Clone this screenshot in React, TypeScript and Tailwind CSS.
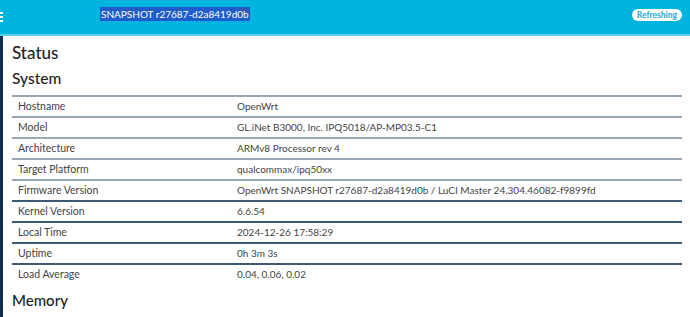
import React from 'react';

type Row = {
    label: string;
    value: string;
};

const rows: Row[] = [
    {label: 'Hostname', value: 'OpenWrt'},
    {label: 'Model', value: 'GL.iNet B3000, Inc. IPQ5018/AP-MP03.5-C1'},
    {label: 'Architecture', value: 'ARMv8 Processor rev 4'},
    {label: 'Target Platform', value: 'qualcommax/ipq50xx'},
    {label: 'Firmware Version', value: 'OpenWrt SNAPSHOT r27687-d2a8419d0b / LuCI Master 24.304.46082-f9899fd'},
    {label: 'Kernel Version', value: '6.6.54'},
    {label: 'Local Time', value: '2024-12-26 17:58:29'},
    {label: 'Uptime', value: '0h 3m 3s'},
    {label: 'Load Average', value: '0.04, 0.06, 0.02'},
];

const App: React.FC = () => {
    return (
        <div className="w-[690px] h-[317px] overflow-hidden bg-white font-['Lato',sans-serif] text-[#333]">
            {/* шапка */}
            <div className="h-[36px] bg-[#00b4e0] border-b-2 border-[#5ccbea] flex items-center">
                <div className="w-[3px] flex flex-col gap-[2px] self-start mt-[12px]">
                    <span className="h-[2px] bg-white" />
                    <span className="h-[2px] bg-white" />
                    <span className="h-[2px] bg-white" />
                </div>
                <div className="ml-[97px] mb-[6px] text-[10px] leading-[12px] text-white">
                    <span className="bg-[#1f5ccc] px-[1px] py-[1px]">SNAPSHOT r27687-d2a8419d0b</span>
                </div>
                <div className="ml-auto mr-[8px] mb-[5px] bg-white rounded-full px-[5px] text-[8.5px] leading-[12px] font-bold text-[#2ba6d6]">
                    Refreshing
                </div>
            </div>

            <div className="flex h-full">
                <div className="w-[3px] bg-[#0d2f4d]" />
                <div className="flex-1 pl-[9px] pr-[8px]">
                    <h2 className="mt-[6px] text-[17px] leading-[22px] font-medium text-[#222]">Status</h2>
                    <h3 className="mt-[4px] text-[15.5px] leading-[20px] font-medium text-[#222]">System</h3>
                    <div className="mt-[7px]">
                        {rows.map((row, index) => (
                            <div
                                key={row.label}
                                className={`flex h-[21px] items-center border-t-2 ${index >= 5 ? 'border-[#3c5976]' : 'border-[#9aa8b6]'}`}
                            >
                                <div className="w-[219px] pl-[6px] text-[10.5px] text-[#444]">{row.label}</div>
                                <div className="pl-[6px] text-[10px] text-[#444]">{row.value}</div>
                            </div>
                        ))}
                    </div>
                    <h3 className="mt-[6px] text-[15px] leading-[20px] font-medium text-[#222]">Memory</h3>
                </div>
            </div>
        </div>
    );
};

export default App;
